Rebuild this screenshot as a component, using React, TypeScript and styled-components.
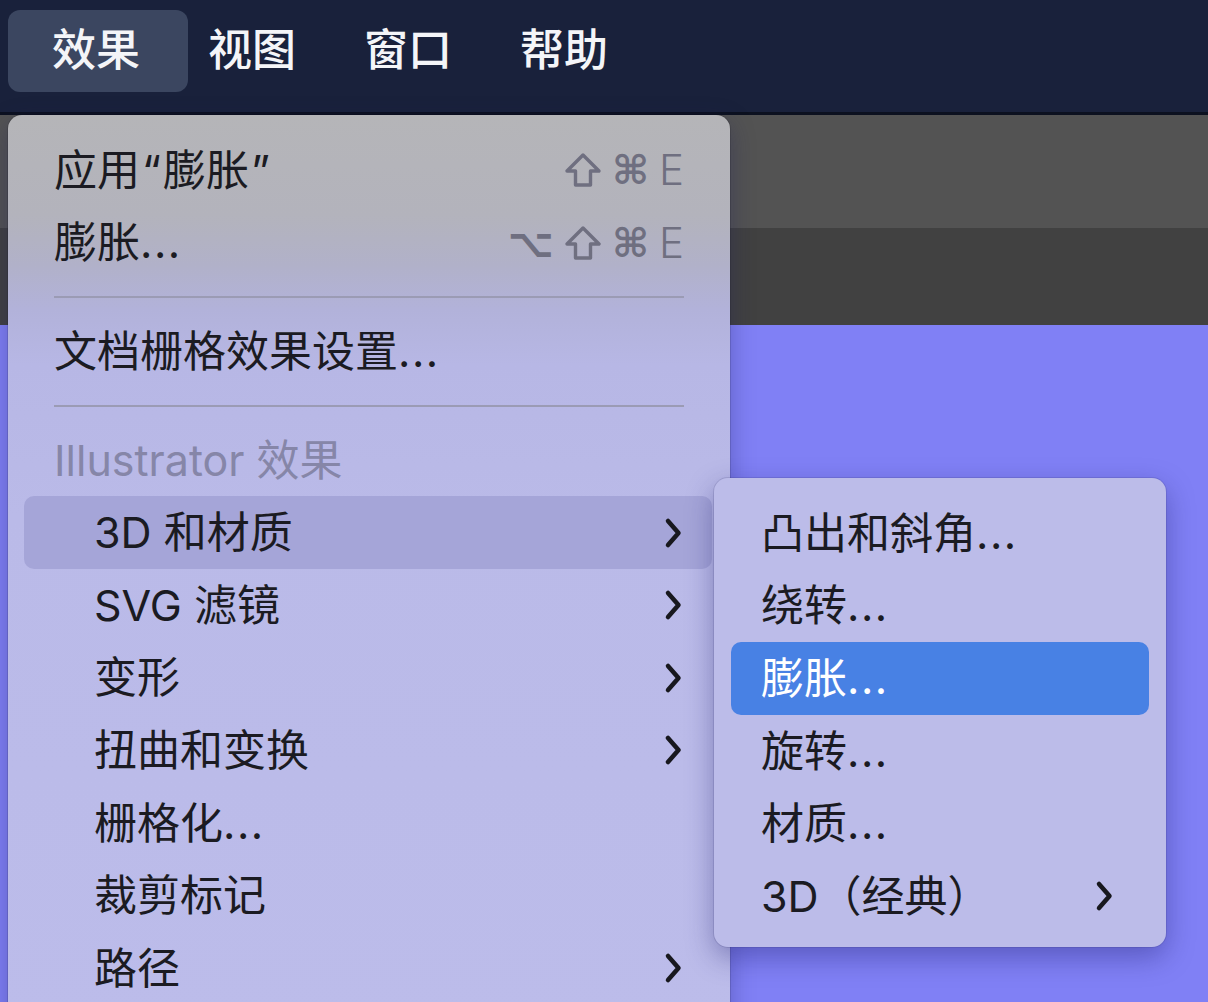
import React from "react";
import styled, { createGlobalStyle } from "styled-components";

const Global = createGlobalStyle`
  html, body { margin: 0; padding: 0; }
  body { font-family: Inter, "Noto Sans CJK SC", sans-serif; background: #8080f5; }
`;

const Screen = styled.div`
  position: relative;
  width: 1208px;
  height: 1002px;
  overflow: hidden;
  display: flex;
  flex-direction: column;
  font-family: Inter, "Noto Sans CJK SC", sans-serif;
`;

const MenuBar = styled.div`
  height: 115px;
  flex: none;
  box-sizing: border-box;
  background: #19213b;
  border-bottom: 3px solid #0c1120;
  display: flex;
  align-items: flex-start;
  padding: 10px 0 0 8px;
`;

const MenuTitle = styled.div<{ $active?: boolean }>`
  height: 82px;
  box-sizing: border-box;
  padding-bottom: 8px;
  display: flex;
  align-items: center;
  color: #f4f5f8;
  font-size: 44px;
  font-weight: 500;
  padding-left: ${(p) => (p.$active ? "44px" : "34px")};
  padding-right: ${(p) => (p.$active ? "48px" : "34px")};
  margin-right: ${(p) => (p.$active ? "-14px" : "0")};
  border-radius: 12px;
  background: ${(p) => (p.$active ? "#3b4660" : "transparent")};
`;

const Band = styled.div<{ $h: number; $c: string }>`
  height: ${(p) => p.$h}px;
  flex: none;
  background: ${(p) => p.$c};
`;

const Canvas = styled.div`
  flex: 1;
  background: #8080f5;
`;

const Dropdown = styled.div`
  position: absolute;
  left: 8px;
  top: 115px;
  width: 722px;
  height: 920px;
  box-sizing: border-box;
  padding: 19px 18px 0 16px;
  border-radius: 14px;
  background: linear-gradient(
    180deg,
    #b5b5b8 0px,
    #b3b3bc 100px,
    #b1b1c9 150px,
    #b2b2da 195px,
    #b7b7e5 250px,
    #babae8 400px,
    #bcbcea 100%
  );
  box-shadow: 0 8px 24px rgba(30, 30, 90, 0.35), 0 0 0 1px rgba(0, 0, 0, 0.12);
  display: flex;
  flex-direction: column;
`;

const SubMenu = styled.div`
  position: absolute;
  left: 714px;
  top: 478px;
  width: 452px;
  box-sizing: border-box;
  padding: 19px 17px 14px 17px;
  border-radius: 14px;
  background: #bcbce9;
  box-shadow: 0 10px 28px rgba(30, 30, 110, 0.4), 0 0 0 1px rgba(40, 40, 90, 0.14);
  display: flex;
  flex-direction: column;
`;

const Row = styled.div<{ $indent?: boolean; $hl?: "soft" | "blue"; $right: number }>`
  height: 72.6px;
  flex: none;
  display: flex;
  align-items: center;
  box-sizing: border-box;
  padding-left: ${(p) => (p.$indent ? 70 : 30)}px;
  padding-right: ${(p) => p.$right}px;
  border-radius: 10px;
  font-size: 43px;
  color: ${(p) => (p.$hl === "blue" ? "#ffffff" : "#1b1b22")};
  background: ${(p) =>
    p.$hl === "blue" ? "#4881e4" : p.$hl === "soft" ? "#a5a5d8" : "transparent"};
  white-space: nowrap;
`;

const Header = styled(Row)`
  color: #8686a8;
`;

const Label = styled.span`
  flex: 1;
  line-height: 1;
`;

const Dots = styled.span`
  letter-spacing: 1.5px;
`;

const Quote = styled.span`
  margin: 0 2px;
`;

const Shortcut = styled.span`
  display: flex;
  align-items: center;
  gap: 10px;
  color: #6f6f80;
  line-height: 1;
`;

const Sym = styled.span`
  font-family: "DejaVu Sans", sans-serif;
  font-size: 40px;
  font-weight: bold;
`;

const Key = styled.span`
  font-family: Inter, sans-serif;
  font-size: 42px;
  font-weight: 300;
`;

const Separator = styled.div`
  height: 36px;
  flex: none;
  display: flex;
  align-items: center;
  padding: 0 28px 0 30px;
  &::after {
    content: "";
    flex: 1;
    height: 2px;
    background: #9b9bb4;
  }
`;

const Chevron = () => (
  <svg width="18" height="32" viewBox="0 0 18 32">
    <polyline
      points="4,4 14.5,16 4,28"
      fill="none"
      stroke="#18181e"
      strokeWidth="4.5"
      strokeLinecap="round"
      strokeLinejoin="round"
    />
  </svg>
);

const ShiftIcon = () => (
  <svg width="38" height="36" viewBox="0 0 38 36">
    <path
      d="M19 3 L35 19 L26.5 19 L26.5 33 L11.5 33 L11.5 19 L3 19 Z"
      fill="none"
      stroke="#6f6f80"
      strokeWidth="3.4"
      strokeLinejoin="round"
    />
  </svg>
);

const Ell = () => <Dots>...</Dots>;

export default function App() {
  return (
    <>
      <Global />
      <Screen>
        <MenuBar>
          <MenuTitle $active>效果</MenuTitle>
          <MenuTitle>视图</MenuTitle>
          <MenuTitle>窗口</MenuTitle>
          <MenuTitle>帮助</MenuTitle>
        </MenuBar>
        <Band $h={113} $c="#535353" />
        <Band $h={97} $c="#414141" />
        <Canvas />

        <Dropdown>
          <Row $right={28}>
            <Label>
              应用<Quote>“</Quote>膨胀<Quote>”</Quote>
            </Label>
            <Shortcut>
              <ShiftIcon />
              <Sym>⌘</Sym>
              <Key>E</Key>
            </Shortcut>
          </Row>
          <Row $right={28}>
            <Label>
              膨胀<Ell />
            </Label>
            <Shortcut>
              <Sym>⌥</Sym>
              <ShiftIcon />
              <Sym>⌘</Sym>
              <Key>E</Key>
            </Shortcut>
          </Row>
          <Separator />
          <Row $right={28}>
            <Label>
              文档栅格效果设置<Ell />
            </Label>
          </Row>
          <Separator />
          <Header $right={28}>
            <Label>Illustrator 效果</Label>
          </Header>
          <Row $indent $hl="soft" $right={30}>
            <Label>3D 和材质</Label>
            <Chevron />
          </Row>
          <Row $indent $right={30}>
            <Label>SVG 滤镜</Label>
            <Chevron />
          </Row>
          <Row $indent $right={30}>
            <Label>变形</Label>
            <Chevron />
          </Row>
          <Row $indent $right={30}>
            <Label>扭曲和变换</Label>
            <Chevron />
          </Row>
          <Row $indent $right={30}>
            <Label>
              栅格化<Ell />
            </Label>
          </Row>
          <Row $indent $right={30}>
            <Label>裁剪标记</Label>
          </Row>
          <Row $indent $right={30}>
            <Label>路径</Label>
            <Chevron />
          </Row>
        </Dropdown>

        <SubMenu>
          <Row $right={36}>
            <Label>
              凸出和斜角<Ell />
            </Label>
          </Row>
          <Row $right={36}>
            <Label>
              绕转<Ell />
            </Label>
          </Row>
          <Row $hl="blue" $right={36}>
            <Label>
              膨胀<Ell />
            </Label>
          </Row>
          <Row $right={36}>
            <Label>
              旋转<Ell />
            </Label>
          </Row>
          <Row $right={36}>
            <Label>
              材质<Ell />
            </Label>
          </Row>
          <Row $right={36}>
            <Label>3D（经典）</Label>
            <Chevron />
          </Row>
        </SubMenu>
      </Screen>
    </>
  );
}
